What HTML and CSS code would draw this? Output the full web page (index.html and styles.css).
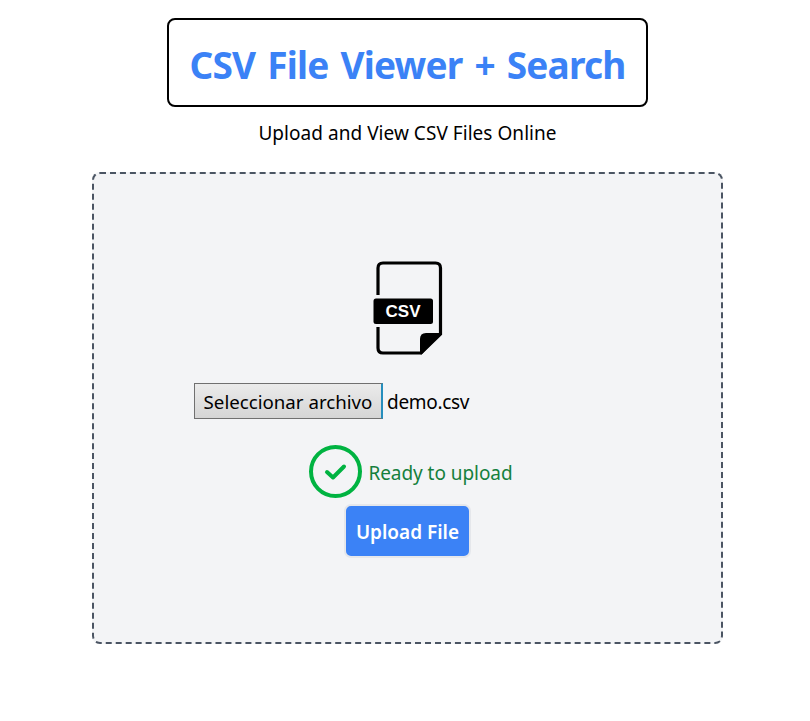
FILE: index.html
```html
<!DOCTYPE html>
<html lang="en">
<head>
<meta charset="utf-8">
<title>CSV File Viewer + Search</title>
<link rel="stylesheet" href="styles.css">
</head>
<body>
<main class="page">
  <h1 class="title"><span>CSV File Viewer + Search</span></h1>
  <p class="subtitle"><span>Upload and View CSV Files Online</span></p>
  <section class="dropzone">
    <svg class="csv-icon" width="70" height="96" viewBox="0 0 70 96">
      <path d="M5 35V8Q5 3 10 3H62.500Q67.500 3 67.500 8V74L48 93H10Q5 93 5 88V67" fill="none" stroke="#000" stroke-width="3.200"/>
      <path d="M47 94V79Q47 73 53 73H69L48.500 94.500Z"/>
      <rect x="0.500" y="38.500" width="59.500" height="25.500" rx="2.500"/>
      <text class="csv-label" x="30" y="57" text-anchor="middle" textLength="35">CSV</text>
    </svg>
    <div class="file-row">
      <button class="choose" type="button"><span>Seleccionar archivo</span></button>
      <span class="filename">demo.csv</span>
    </div>
    <div class="status">
      <svg class="check" width="54" height="54" viewBox="0 0 54 54" fill="none" stroke="#00b341" stroke-width="4">
        <circle cx="27.500" cy="26.500" r="24.500"/>
        <path d="M19 27L25 32.500L36 21.500" stroke-linecap="round" stroke-linejoin="round"/>
      </svg>
      <span class="ready">Ready to upload</span>
    </div>
    <button class="upload" type="button"><span>Upload File</span></button>
  </section>
</main>
</body>
</html>
```
FILE: styles.css
```css
* { box-sizing: border-box; }
body {
  margin: 0;
  background: #fff;
  color: #000;
  font: 400 19px/28px "Noto Sans", "Open Sans", sans-serif;
}
.page {
  width: 631px;
  margin-left: 92px;
  padding-top: 18px;
  display: flex;
  flex-direction: column;
  align-items: center;
}
.title {
  width: 481px;
  height: 89px;
  margin: 0;
  border: 2px solid #000;
  border-radius: 8px;
  display: flex;
  align-items: center;
  justify-content: center;
  color: #3b82f6;
  font-size: 37px;
  font-weight: 700;
  line-height: 44px;
  white-space: nowrap;
  padding-top: 4px;
  letter-spacing: -0.77px;
  word-spacing: 3px;
}
.subtitle {
  margin: 12px 0 0;
  height: 53px;
  white-space: nowrap;
  letter-spacing: 0.04px;
}
.dropzone {
  width: 631px;
  height: 472px;
  border: 2px dashed #4b5563;
  border-radius: 8px;
  background: #f3f4f6;
  display: flex;
  flex-direction: column;
  align-items: center;
  padding-top: 86px;
}
.csv-icon { flex: none; }
.csv-label {
  fill: #fff;
  font: 700 17px "Liberation Sans", sans-serif;
}
.file-row {
  width: 427px;
  height: 36px;
  margin-top: 27px;
  display: flex;
  align-items: center;
  gap: 4px;
  white-space: nowrap;
}
.choose {
  width: 189px;
  height: 36px;
  padding: 1px 0 0;
  border: 1px solid #707070;
  border-right: 2px solid #268ebd;
  background: linear-gradient(#ebebeb, #d5d5d5);
  color: #000;
  font: inherit;
  font-size: 18.7px;
  white-space: nowrap;
}
.filename { padding-top: 2px; letter-spacing: -0.3px; }
.status {
  height: 54px;
  margin: 26px 0 0 6px;
  display: flex;
  align-items: center;
  gap: 6px;
  white-space: nowrap;
}
.check { flex: none; }
.ready { color: #15803d; padding-top: 2px; letter-spacing: -0.05px; }
.upload {
  width: 127px;
  height: 54px;
  margin-top: 5px;
  padding: 2px 0 0;
  border: 2px solid #e5e7eb;
  border-radius: 7px;
  background: #3b82f6;
  color: #fff;
  font: inherit;
  font-weight: 600;
  white-space: nowrap;
}
```
